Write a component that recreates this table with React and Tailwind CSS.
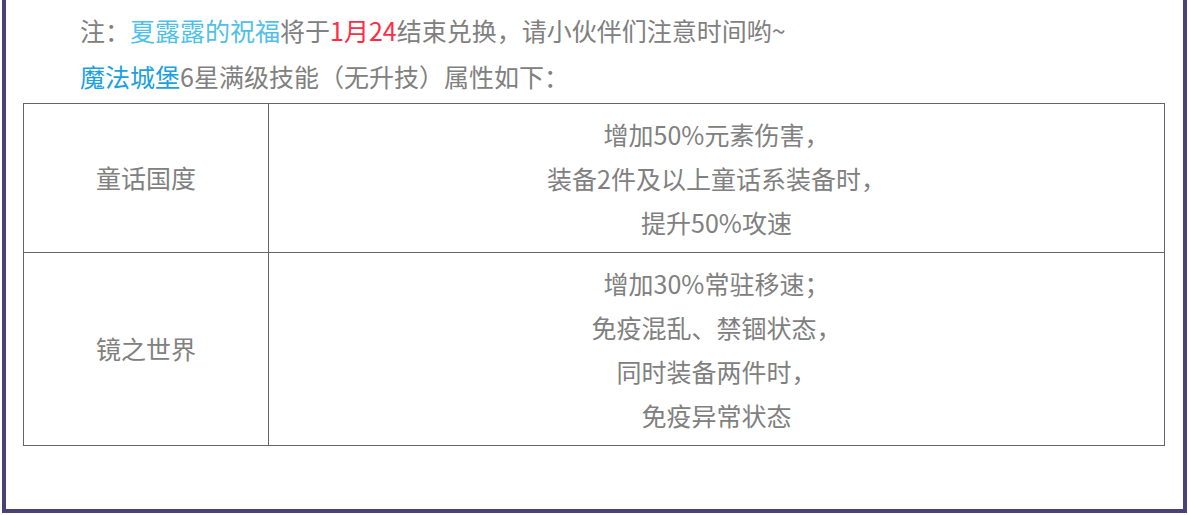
import React from "react";

const rows = [
    {
        name: "童话国度",
        lines: ["增加50%元素伤害，", "装备2件及以上童话系装备时，", "提升50%攻速"],
    },
    {
        name: "镜之世界",
        lines: ["增加30%常驻移速；", "免疫混乱、禁锢状态，", "同时装备两件时，", "免疫异常状态"],
    },
];

const App = () => {
    return (
        <div className="w-[1189px] h-[515px] bg-white">
            <div
                className="ml-[2px] w-[1185px] h-[513px] border-l-4 border-r-4 border-b-4 border-[#4a4177] pl-[17px] pr-[18px] text-[25px] text-[#808080]"
                style={{ fontFamily: '"Noto Sans CJK SC", "Noto Sans", sans-serif' }}
            >
                <p className="pt-[7px] pl-[57px] leading-[46px]">
                    注：<span className="text-[#4fc1e9]">夏露露的祝福</span>将于
                    <span className="text-[#fe2d46]">1月24</span>
                    结束兑换，请小伙伴们注意时间哟~
                </p>
                <p className="pl-[57px] leading-[46px]">
                    <span className="text-[#1ba1e2]">魔法城堡</span>6星满级技能（无升技）属性如下：
                </p>
                <table className="mt-[4px] w-[1142px] border-collapse">
                    <tbody>
                        {rows.map((row) => (
                            <tr key={row.name}>
                                <td className="w-[245px] border border-[#666666] text-center py-[8px]">
                                    {row.name}
                                </td>
                                <td className="border border-[#666666] text-center py-[8px] leading-[44px]">
                                    {row.lines.map((line, i) => (
                                        <div key={i}>{line}</div>
                                    ))}
                                </td>
                            </tr>
                        ))}
                    </tbody>
                </table>
            </div>
        </div>
    );
};

export default App;
